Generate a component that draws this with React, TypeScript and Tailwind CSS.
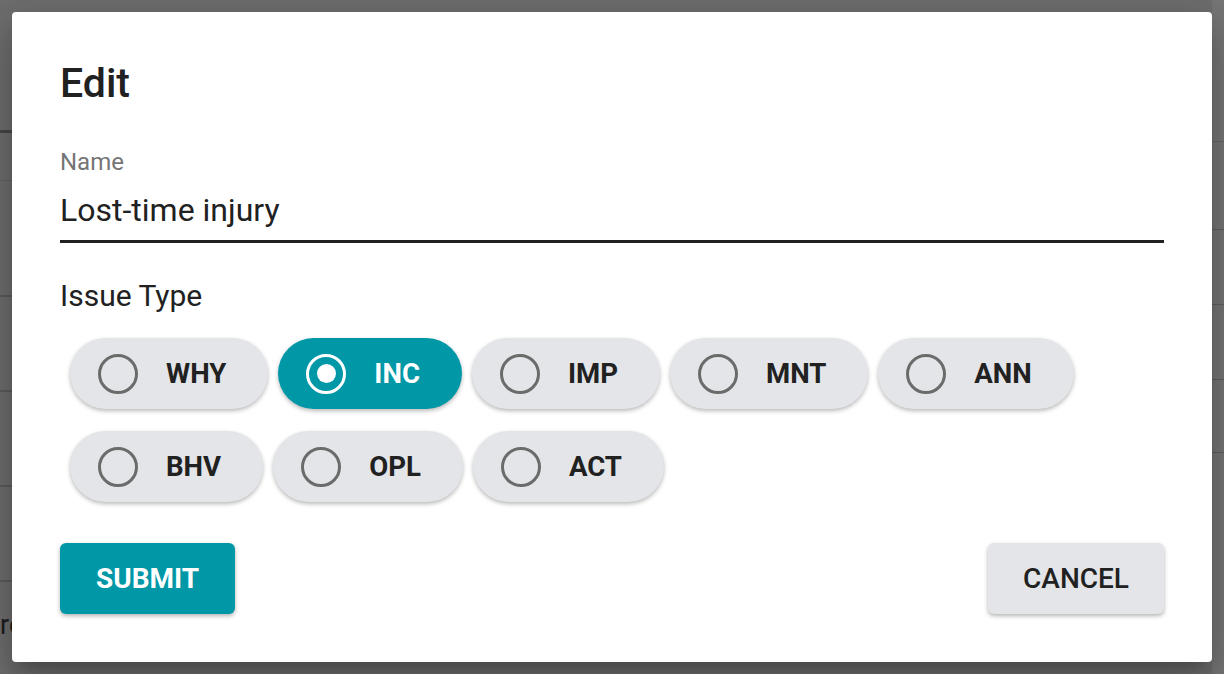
import { useState } from 'react';

const issueTypes = [
  ['WHY', 'INC', 'IMP', 'MNT', 'ANN'],
  ['BHV', 'OPL', 'ACT'],
];

const font = { fontFamily: 'Roboto, "Liberation Sans", sans-serif' };

function Chip({ label, selected, onClick }: { label: string; selected: boolean; onClick(): void }) {
  return (
    <button
      type="button"
      onClick={onClick}
      className={`flex h-[71px] items-center gap-[28px] rounded-full pl-[28px] pr-[42px] shadow-[0_2px_4px_rgba(0,0,0,0.28)] ${
        selected ? 'bg-[#0097a7] text-white' : 'bg-[#e3e5e8] text-[#212121]'
      }`}
    >
      <span
        className={`flex h-[40px] w-[40px] items-center justify-center rounded-full border-[3.5px] ${
          selected ? 'border-white' : 'border-[#6b6b6b]'
        }`}
      >
        {selected && <span className="h-[19px] w-[19px] rounded-full bg-white" />}
      </span>
      <span className="text-[27.6px] font-bold leading-none">{label}</span>
    </button>
  );
}

export default function App() {
  const [selected, setSelected] = useState('INC');

  return (
    <div className="relative h-[674px] w-[1224px] overflow-hidden bg-[#6e6e6e]" style={font}>
      {/* page behind the overlay */}
      <div className="flex h-full justify-between">
        <div className="flex w-[12px] flex-col">
          <div className="h-[133px] border-b-[3px] border-[#474747]" />
          <div className="h-[48px] border-b border-[#626262]" />
          <div className="h-[116px] border-b-2 border-[#5c5c5c]" />
          <div className="h-[95px] border-b-2 border-[#5c5c5c]" />
          <div className="h-[95px] border-b-2 border-[#5c5c5c]" />
          <div className="h-[95px] border-b-2 border-[#5c5c5c]" />
          <div className="mt-[30px] text-[27px] leading-none text-[#1d1d1d]">re</div>
        </div>
        <div className="flex w-[12px] flex-col bg-[#767676]">
          <div className="h-[142px] border-b border-[#666]" />
          <div className="h-[88px] border-b border-[#606060]" />
          <div className="h-[75px] border-b border-[#606060]" />
          <div className="h-[75px] border-b border-[#606060]" />
          <div className="h-[73px] border-b border-[#606060]" />
        </div>
      </div>

      {/* dialog */}
      <div className="absolute left-[12px] top-[12px] flex h-[650px] w-[1200px] flex-col rounded-[4px] bg-white px-[48px] pt-[47px] shadow-[0_11px_15px_-7px_rgba(0,0,0,0.2),0_24px_38px_3px_rgba(0,0,0,0.14),0_9px_46px_8px_rgba(0,0,0,0.12)]">
        <h2 className="text-[41px] font-medium leading-[48px] text-[#212121]">Edit</h2>

        <label className="mt-[41px] text-[24px] leading-[28px] text-[#757575]">Name</label>
        <div className="mt-[15px] border-b-[3px] border-[#212121] pb-[11px] text-[32px] leading-[38px] text-[#212121]">
          Lost-time injury
        </div>

        <div className="mt-[36px] text-[30px] leading-[34px] text-[#212121]">Issue Type</div>

        <div className="mt-[25px] flex flex-col gap-[22px] pl-[10px]">
          {issueTypes.map((row, i) => (
            <div key={i} className="flex gap-[10px]">
              {row.map((t) => (
                <Chip key={t} label={t} selected={selected === t} onClick={() => setSelected(t)} />
              ))}
            </div>
          ))}
        </div>

        <div className="mt-[41px] flex justify-between">
          <button
            type="button"
            className="h-[71px] rounded-[6px] bg-[#0097a7] px-[36px] text-[28px] font-bold text-white shadow-[0_2px_4px_rgba(0,0,0,0.3)]"
          >
            SUBMIT
          </button>
          <button
            type="button"
            className="h-[71px] rounded-[6px] bg-[#e3e5e8] px-[35px] text-[28px] font-medium text-[#212121] shadow-[0_2px_4px_rgba(0,0,0,0.3)]"
          >
            CANCEL
          </button>
        </div>
      </div>
    </div>
  );
}
